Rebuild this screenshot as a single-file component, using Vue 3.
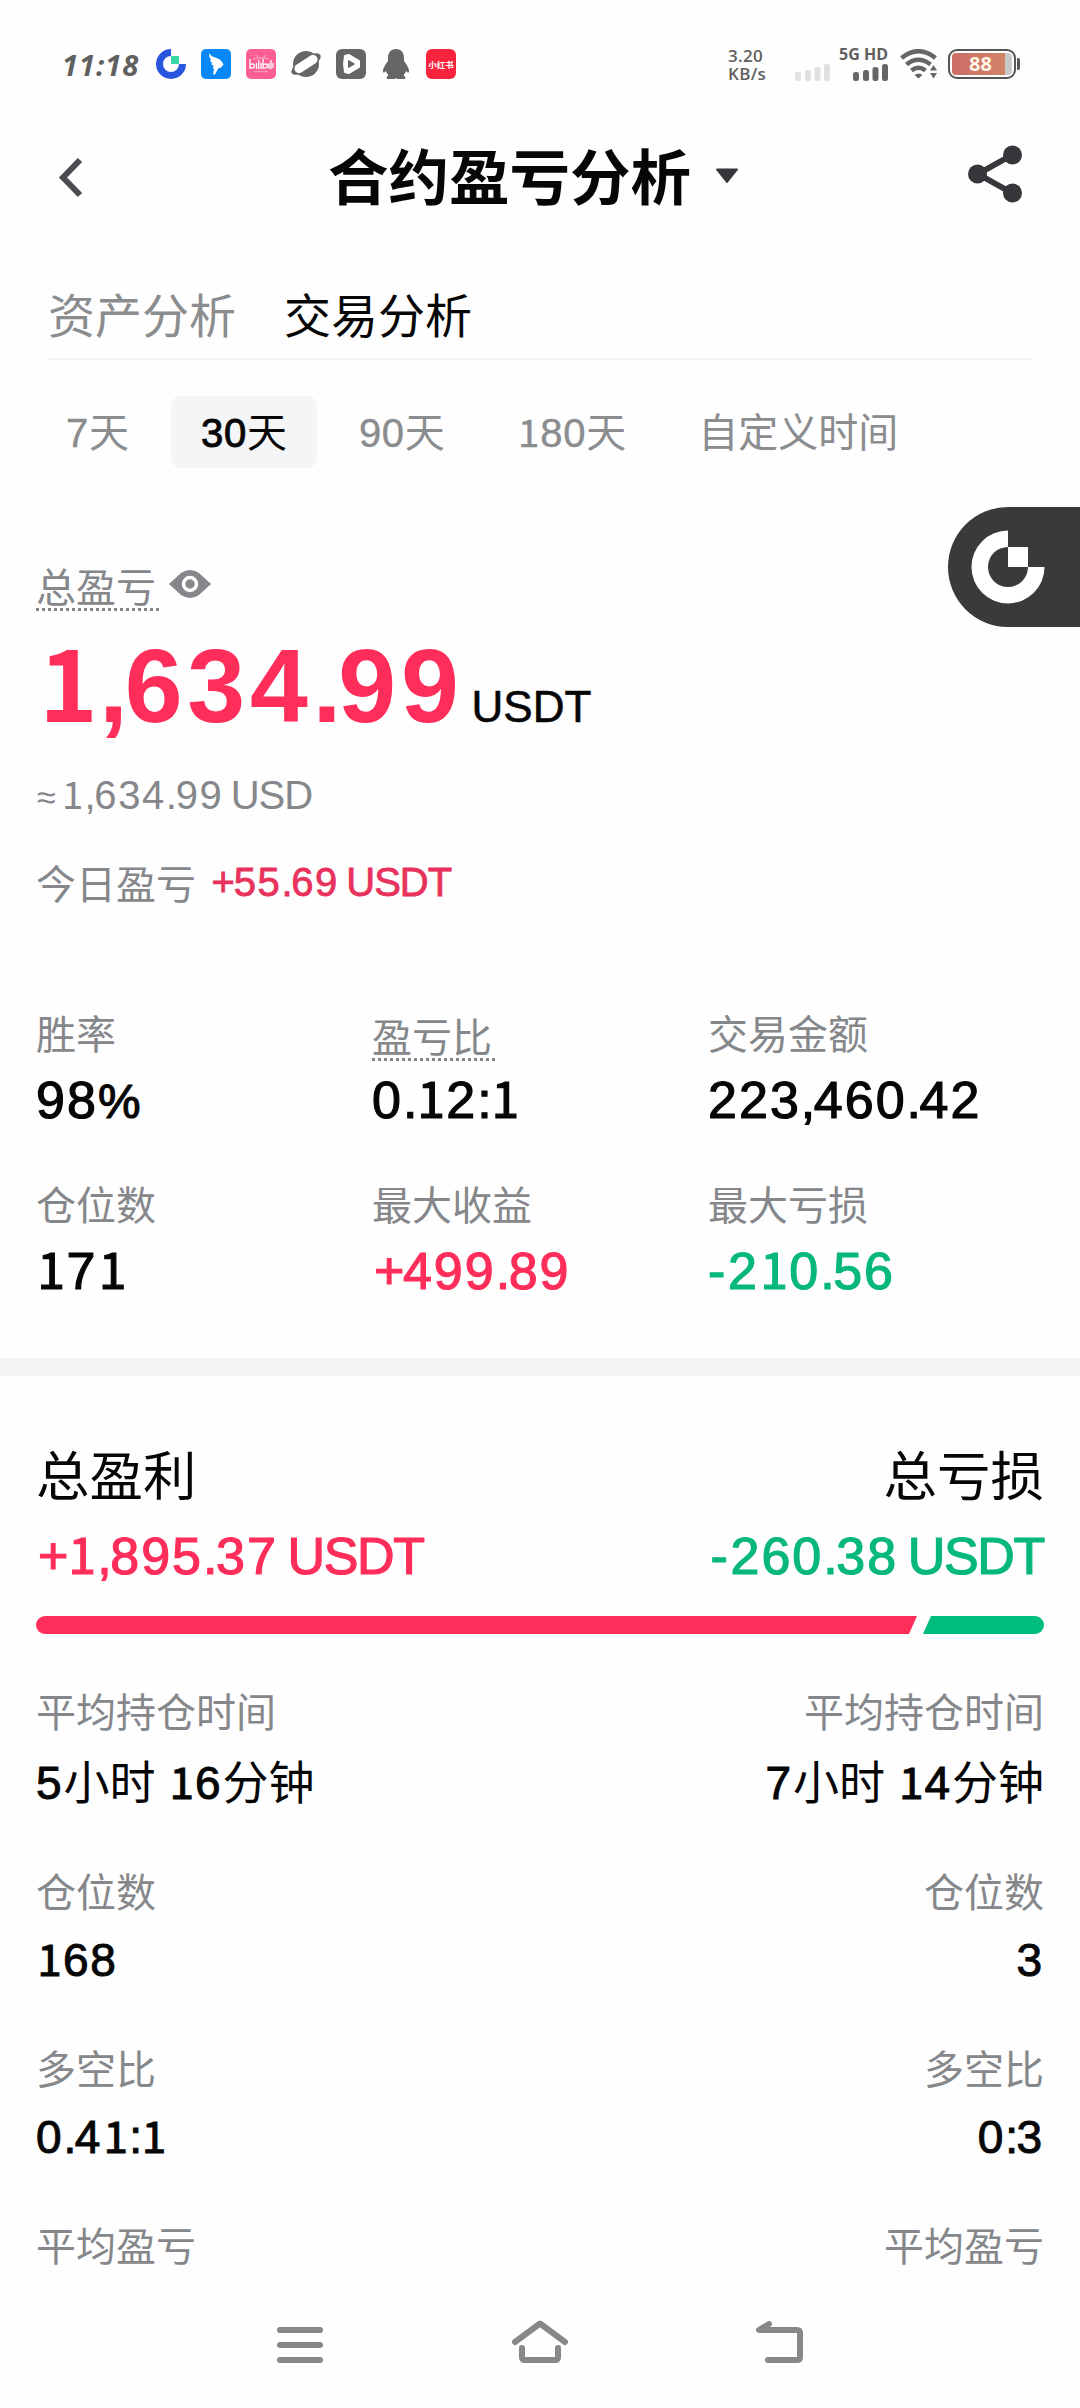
<script setup>
import { h } from 'vue'

// Splits a figure into runs so digits, the footed "1", signs and separators keep their own advance.
const kindOf = (s) => {
  if (s === '1') return 'one'
  if (s === '+') return 'plus'
  if (s === '-') return 'minus'
  if (s === '%') return 'pct'
  if (/^\d/.test(s)) return 'dig'
  if (/^[.,:]$/.test(s)) return 'sep'
  return /[\u4e00-\u9fff]/.test(s) ? 'han' : 'txt'
}
const Fig = ({ v }) =>
  h('span', { class: 'fig' }, (v.match(/1|[02-9]+|[.,:+%-]|[^0-9.,:+%-]+/g) || []).map((s) =>
    h('span', { class: kindOf(s) }, s)
  ))
Fig.props = ['v']

const tabs = [{ t: '资产分析' }, { t: '交易分析', on: true }]
const ranges = ['7天', '30天', '90天', '180天', '自定义时间']
const stats = [
  { k: '胜率', v: '98%' },
  { k: '盈亏比', v: '0.12:1', tip: true },
  { k: '交易金额', v: '223,460.42' },
  { k: '仓位数', v: '171' },
  { k: '最大收益', v: '+499.89', c: 'up' },
  { k: '最大亏损', v: '-210.56', c: 'down' }
]
const pairs = [
  { k: '平均持仓时间', a: '5小时 16分钟', b: '7小时 14分钟' },
  { k: '仓位数', a: '168', b: '3' },
  { k: '多空比', a: '0.41:1', b: '0:3' },
  { k: '平均盈亏' }
]
</script>

<template>
  <div class="page">
    <div class="status">
      <span class="time">11:18</span>
      <div class="apps">
        <svg width="30" height="30" viewBox="0 0 30 30">
          <path d="M15 0A15 15 0 1 0 30 15H23A8 8 0 1 1 15 7Z" fill="#2855dd" />
          <rect x="15" y="7" width="8" height="8" fill="#37d8a4" />
        </svg>
        <svg width="30" height="30" viewBox="0 0 30 30">
          <rect width="30" height="30" rx="5" fill="#0786f5" />
          <path d="M8 4Q10 7.500 15 8.800 20.500 10.500 22.500 15.500L19.500 19 17.500 19 14 25.500 12 25.500 13 20 11.500 18.500 13 17.300 10 15 11.300 14.200 8.800 11.500 10 10.800Q8 8 8 4Z" fill="#fff" />
        </svg>
        <svg width="30" height="30" viewBox="0 0 30 30">
          <rect width="30" height="30" rx="5" fill="#fb5f95" />
          <path d="M10 6l3 3M20 6l-3 3M7 10q8-2 16 0M8 22.500h14" stroke="#ff8fb5" stroke-width="1.500" fill="none" />
          <path d="M4 10v9q4.500 .5 4.500-2.200T4.500 15.500M10.500 14v6M12.800 11v9M15 14v6M17 10v9q4.500 .5 4.500-2.200T17.500 15.500M23 14v6M25 11v9M27 14v5" stroke="#fff" stroke-width="1.300" fill="none" />
        </svg>
        <svg width="30" height="30" viewBox="0 0 30 30">
          <circle cx="15" cy="15" r="13" fill="#666" />
          <g transform="rotate(-33 15 15)">
            <ellipse cx="15" cy="15" rx="17" ry="6.500" fill="#666" />
            <rect x="2" y="10.500" width="26" height="9" rx="4.500" fill="#fff" />
          </g>
        </svg>
        <svg width="30" height="30" viewBox="0 0 30 30">
          <rect width="30" height="30" rx="6" fill="#666" />
          <path d="M9 7l4-1 10 6v6l-10 6-4-1-1-8Z" fill="#fff" stroke="#fff" stroke-width="2" stroke-linejoin="round" />
          <path d="M12.500 11.500v7l6-3.500Z" fill="#666" stroke="#666" stroke-linejoin="round" />
        </svg>
        <svg width="30" height="30" viewBox="0 0 30 30">
          <path d="M15 0C9.500 0 7 4 7 9v3C4 16 1.500 20 2 23q1 1.500 3-1 .8 2.500 2.500 4.500-2.500 1-1.500 3.500h8.500v-1h1v1H24q1-2.500-1.500-3.500 1.700-2 2.500-4.500 2 2.500 3 1C28.500 20 26 16 23 12V9C23 4 20.500 0 15 0Z" fill="#666" />
        </svg>
        <span class="red">小红书</span>
      </div>
      <div class="speed"><span>3.20</span><span>KB/s</span></div>
      <svg class="sig" width="36" height="17" viewBox="0 0 36 17" fill="#e1e1e1">
        <rect y="8" width="6" height="9" rx="2" /><rect x="10" y="6" width="6" height="11" rx="2" /><rect x="19.500" y="3" width="6" height="14" rx="2" /><rect x="29" width="6" height="17" rx="2" />
      </svg>
      <div class="cell">
        <span>5G HD</span>
        <svg width="36" height="17" viewBox="0 0 36 17" fill="#666">
          <rect y="8" width="6" height="9" rx="2.500" /><rect x="10" y="6" width="6" height="11" rx="2.500" /><rect x="19.500" y="3" width="6" height="14" rx="2.500" /><rect x="29" width="6" height="17" rx="2.500" />
        </svg>
      </div>
      <svg class="wifi" width="38" height="30" viewBox="0 0 38 30" fill="none" stroke="#666" stroke-width="4.600">
        <path d="M1.500 9Q18.500-4.500 35.500 9M6.500 15.500Q18.500 6 30.500 15.500M11.500 21.500Q18.500 16 25.500 21.500" />
        <path d="M14.500 26q4-3 8 0l-4 3.500Z" fill="#666" stroke="none" />
        <path d="M30 21.500l3.500-5.500 3.500 5.500ZM30 24h7l-3.500 5.500Z" fill="#666" stroke="none" />
      </svg>
      <div class="battery"><div class="charge">88</div></div>
      <i class="tip"></i>
    </div>

    <header class="head">
      <svg width="26" height="42" viewBox="0 0 26 42"><path d="M22 3L5 20.500 22 38" fill="none" stroke="#4b4c50" stroke-width="6" /></svg>
      <h1>合约盈亏分析</h1>
      <svg class="caret" width="24" height="16" viewBox="0 0 24 16"><path d="M2 1.500h20L12 14Z" fill="#36373a" stroke="#36373a" stroke-width="2" stroke-linejoin="round" /></svg>
      <svg class="share" width="56" height="60" viewBox="0 0 56 60" fill="#36373a">
        <path d="M45 11L11 30 45 49" fill="none" stroke="#36373a" stroke-width="6" />
        <circle cx="45.500" cy="11" r="9.500" /><circle cx="10.500" cy="30" r="9.500" /><circle cx="45.500" cy="49" r="9.500" />
      </svg>
    </header>

    <nav class="tabs"><span v-for="t in tabs" :key="t.t" :class="{ on: t.on }">{{ t.t }}</span></nav>
    <div class="ranges">
      <span v-for="(r, i) in ranges" :key="r" :class="{ on: i === 1 }"><Fig :v="r" /></span>
    </div>

    <section class="summary">
      <div class="label total">
        <span class="tipped">总盈亏</span>
        <svg width="42" height="28" viewBox="0 0 42 28">
          <path d="M0 14L12 3Q21-3 30 3L42 14 30 25Q21 31 12 25Z" fill="#85878a" />
          <circle cx="21" cy="14" r="6.500" fill="#85878a" stroke="#fff" stroke-width="3.500" />
        </svg>
      </div>
      <div class="amount"><Fig class="big up" v="1,634.99" /><span class="unit">USDT</span></div>
      <div class="approx"><span class="eq">≈</span><Fig v="1,634.99 USD" /></div>
      <div class="today">今日盈亏<Fig class="med up" v="+55.69 USDT" /></div>
    </section>

    <section class="stats">
      <div v-for="s in stats" :key="s.k" class="stat">
        <div class="label"><span :class="{ tipped: s.tip }">{{ s.k }}</span></div>
        <div class="value" :class="s.c"><Fig :v="s.v" /></div>
      </div>
    </section>

    <div class="band"></div>

    <section class="compare">
      <div class="row title"><span>总盈利</span><span>总亏损</span></div>
      <div class="row value sums"><Fig class="up" v="+1,895.37 USDT" /><Fig class="down" v="-260.38 USDT" /></div>
      <div class="bar"><div class="win"></div><div class="loss"></div></div>
      <div v-for="p in pairs" :key="p.k" class="pair">
        <div class="row label"><span>{{ p.k }}</span><span>{{ p.k }}</span></div>
        <div v-if="p.a" class="row small"><Fig :v="p.a" /><Fig :v="p.b" /></div>
      </div>
    </section>

    <footer class="sysnav">
      <svg width="46" height="36" viewBox="0 0 46 36"><path d="M3 3h40M3 18h40M3 33h40" /></svg>
      <svg class="home" width="58" height="44" viewBox="0 0 58 44"><path d="M4 22L29 3.500 54 22M11 28v9q0 3 3 3h30q3 0 3-3v-9" /></svg>
      <svg class="ret" width="50" height="42" viewBox="0 0 50 42"><path d="M14 3L4 9H42q3 0 3 3v24q0 3-3 3H13" /></svg>
    </footer>

    <div class="float">
      <svg width="74" height="74" viewBox="0 0 74 74" fill="#fff">
        <path d="M37 .5A36.500 36.500 0 1 0 73.500 37H57A20 20 0 1 1 37 17Z" /><rect x="37" y="17" width="20" height="20" />
      </svg>
    </div>
  </div>
</template>

<style>
body { margin: 0; background: #fefefe; }
</style>

<style scoped>
.page {
  position: relative;
  width: 1080px;
  height: 2408px;
  overflow: hidden;
  background: #fefefe;
  color: #060606;
  font-family: "Liberation Sans", "Noto Sans CJK SC", sans-serif;
  white-space: nowrap;
}
svg { display: block; flex: none; }
.page :deep(.dig) { letter-spacing: .039em; }
.page :deep(.sep) { letter-spacing: -.03em; }
.page :deep(.txt) { letter-spacing: -.025em; word-spacing: -.07em; white-space: pre; }
.page :deep(.plus) { margin-left: .04em; letter-spacing: -.03em; }
.page :deep(.minus) { letter-spacing: .05em; }
.page :deep(.pct) { font-size: .92em; }
.page :deep(.han) { -webkit-text-stroke: 0; white-space: pre; }
.page :deep(.one) {
  display: inline-block;
  width: .61em;
  font-family: "Noto Sans CJK SC", sans-serif;
  font-size: .96em;
  line-height: 0;
  text-align: center;
}

.status { display: flex; align-items: center; box-sizing: border-box; height: 128px; padding-left: 62px; color: #606060; }
.time { width: 94px; font: italic 700 29px "Open Sans", sans-serif; letter-spacing: 1px; }
.apps { display: flex; gap: 15px; }
.red { width: 30px; height: 30px; border-radius: 6px; background: #f8243d; color: #fff; font: 700 8.500px/30px "Noto Sans CJK SC", sans-serif; text-align: center; }
.speed { display: flex; flex-direction: column; gap: 1px; margin-left: 272px; width: 67px; font: 600 17px/17px "Open Sans", sans-serif; letter-spacing: .3px; }
.sig { margin-top: 16px; }
.cell { display: flex; flex-direction: column; align-items: flex-end; width: 57px; height: 34px; gap: 3px; font: 700 16px/14px "Open Sans", sans-serif; }
.cell svg { margin-right: -1px; }
.wifi { margin-left: 12px; }
.battery { box-sizing: border-box; width: 68px; height: 30px; margin-left: 10px; padding: 2px; border: 2px solid #555; border-radius: 9px; }
.charge { box-sizing: border-box; height: 22px; padding-right: 3px; border-radius: 4px; background: linear-gradient(90deg, #cc6c66, #d18468 88%, #c9c9c9 88%); color: #fff5e6; font: 700 20px/22px "Open Sans", sans-serif; text-align: center; }
.tip { width: 3px; height: 12px; margin-left: 1px; border-radius: 0 2px 2px 0; background: #555; }

.head { display: flex; align-items: center; height: 100px; padding-left: 58px; }
.head h1 { margin: 2px 0 0 244px; width: 362px; font-size: 60.500px; line-height: 80px; font-weight: 700; }
.caret { margin-left: 25px; margin-top: -4px; }
.share { margin-left: 228px; margin-top: -8px; }

.tabs { display: flex; gap: 48px; box-sizing: border-box; height: 132px; margin: 0 48px; padding-top: 59px; border-bottom: 2px solid #f5f5f5; font-size: 47px; line-height: 60px; color: #8a8c8e; }
.tabs .on { color: #060606; }

.ranges { display: flex; gap: 12px; margin: 36px 0 0 36px; font-size: 40px; line-height: 74px; color: #8a8c8e; }
.ranges > span { height: 72px; padding: 0 30px; border-radius: 10px; -webkit-text-stroke: .4px currentColor; }
.ranges :deep(.dig) { letter-spacing: .018em; }
.ranges .on { background: #f3f5f7; color: #060606; -webkit-text-stroke: 1px currentColor; }

.label, .approx, .today { height: 56px; font-size: 40px; line-height: 56px; color: #85878a; }
.tipped { display: inline-block; height: 51px; padding-right: 3px; background: repeating-linear-gradient(90deg, #85878a 0 3px, transparent 3px 6px) left bottom / 100% 3px no-repeat; }
.up { color: #fe2d5a; }
.down { color: #07b77d; }

.summary { padding: 92px 36px 0; }
.total { display: flex; }
.total svg { margin: 10px 0 0 10px; }
.amount { display: flex; align-items: baseline; height: 100px; margin-top: 20px; line-height: 100px; }
.big { font-size: 104px; font-weight: 700; margin-left: 2px; }
.big :deep(.dig) { letter-spacing: .046em; }
.unit { margin-left: 8px; font-size: 44px; -webkit-text-stroke: .6px currentColor; }
.approx { margin-top: 31px; }
.eq { display: inline-block; width: 24px; padding-left: 1px; font-size: 34px; }
.today { margin-top: 34px; }
.med { margin-left: 14px; vertical-align: 3px; line-height: 1; -webkit-text-stroke: .8px currentColor; }
.today .up { color: #e8315c; }

.stats { display: grid; grid-template-columns: 336px 336px 336px; row-gap: 48px; margin: 94px 36px 57px; }
.stats .tipped { margin-top: 3px; }
.value { height: 60px; font-size: 52px; line-height: 60px; -webkit-text-stroke: 1.2px currentColor; }
.stat .value { margin-top: 7px; }

.band { height: 18px; background: #f3f4f6; }

.compare { padding: 66px 36px 0; }
.row { display: flex; justify-content: space-between; }
.title { height: 70px; font-size: 53.500px; line-height: 71px; }
.sums { margin-top: 14px; }
.bar { display: flex; height: 18px; margin-top: 30px; margin-bottom: 51px; border-radius: 9px; overflow: hidden; }
.win { width: 881px; background: #ff2d59; clip-path: polygon(0 0, 100% 0, 873px 100%, 0 100%); }
.loss { flex: 1; margin-left: 6px; background: #00bc7f; clip-path: polygon(8px 0, 100% 0, 100% 100%, 0 100%); }
.pair { margin-bottom: 52px; }
.small { height: 60px; margin-top: 9px; font-size: 46px; line-height: 60px; -webkit-text-stroke: 1px currentColor; }
.bar + .pair .small { margin-top: 12px; }
.pair:last-child { margin-bottom: 0; }

.sysnav { display: flex; padding: 52px 0 0 277px; fill: none; stroke: #888; stroke-width: 6; stroke-linecap: round; stroke-linejoin: round; }
.home { margin: -7px 0 0 188px; }
.ret { margin: -6px 0 0 186px; }

.float { position: absolute; top: 507px; right: 0; display: flex; align-items: center; box-sizing: border-box; width: 132px; height: 120px; padding-left: 23px; border-radius: 60px 0 0 60px; background: #3a3a3a; }
</style>
